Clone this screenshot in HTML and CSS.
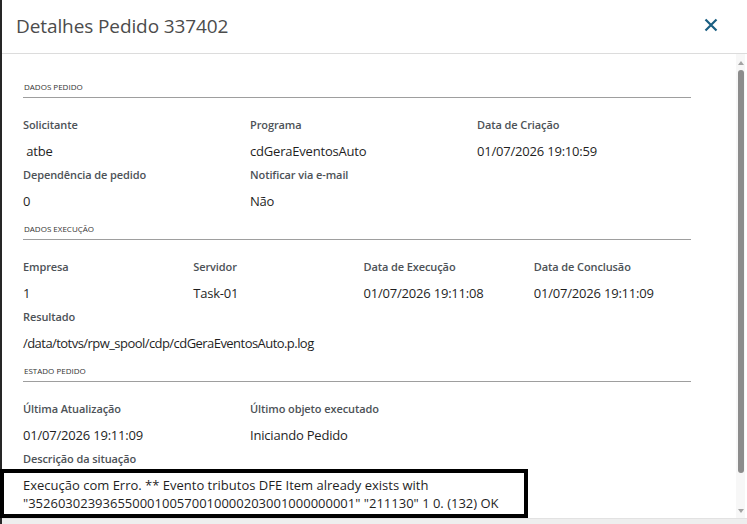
FILE: index.html
```html
<!DOCTYPE html>
<html lang="pt-BR">
<head>
    <meta charset="UTF-8">
    <meta name="viewport" content="width=device-width, initial-scale=1.0">
    <title>Detalhes Pedido</title>
    <link rel="stylesheet" href="styles.css">
</head>
<body>
    <div class="modal">
        <!-- Header -->
        <header class="modal-header">
            <h1 class="modal-title">Detalhes Pedido 337402</h1>
            <button class="close-btn" aria-label="Fechar">
                <svg width="14" height="14" viewBox="0 0 14 14"><path d="M1.5 1.5 L12.5 12.5 M12.5 1.5 L1.5 12.5" stroke="#1a5f82" stroke-width="2.2" fill="none"/></svg>
            </button>
        </header>

        <!-- Body -->
        <div class="modal-body">
            <div class="content">
                <section class="group">
                    <h2 class="group-title">DADOS PEDIDO</h2>
                    <div class="fields cols-3">
                        <div class="field"><span class="label">Solicitante</span><span class="value">&nbsp;atbe</span></div>
                        <div class="field"><span class="label">Programa</span><span class="value">cdGeraEventosAuto</span></div>
                        <div class="field"><span class="label">Data de Criação</span><span class="value">01/07/2026 19:10:59</span></div>
                        <div class="field"><span class="label">Dependência de pedido</span><span class="value">0</span></div>
                        <div class="field"><span class="label">Notificar via e-mail</span><span class="value">Não</span></div>
                    </div>
                </section>

                <section class="group">
                    <h2 class="group-title">DADOS EXECUÇÃO</h2>
                    <div class="fields cols-4">
                        <div class="field"><span class="label">Empresa</span><span class="value">1</span></div>
                        <div class="field"><span class="label">Servidor</span><span class="value">Task-01</span></div>
                        <div class="field"><span class="label">Data de Execução</span><span class="value">01/07/2026 19:11:08</span></div>
                        <div class="field"><span class="label">Data de Conclusão</span><span class="value">01/07/2026 19:11:09</span></div>
                        <div class="field full"><span class="label">Resultado</span><span class="value path">/data/totvs/rpw_spool/cdp/cdGeraEventosAuto.p.log</span></div>
                    </div>
                </section>

                <section class="group">
                    <h2 class="group-title">ESTADO PEDIDO</h2>
                    <div class="fields cols-3">
                        <div class="field"><span class="label">Última Atualização</span><span class="value">01/07/2026 19:11:09</span></div>
                        <div class="field"><span class="label">Último objeto executado</span><span class="value">Iniciando Pedido</span></div>
                        <div class="field"></div>
                        <div class="field full">
                            <span class="label">Descrição da situação</span>
                            <p class="situation">Execução com Erro. ** Evento tributos DFE Item already exists with "35260302393655000100570010000203001000000001" "211130" 1 0. (132) OK</p>
                        </div>
                    </div>
                </section>
            </div>

            <!-- Scrollbar -->
            <div class="scrollbar">
                <span class="arrow up"></span>
                <span class="thumb"></span>
                <span class="arrow down"></span>
            </div>
        </div>

        <footer class="modal-footer"></footer>
    </div>
</body>
</html>
```

FILE: styles.css
```css
/* Basic styling */
* { box-sizing: border-box; margin: 0; padding: 0; }
body { width: 747px; height: 524px; overflow: hidden; background-color: #ffffff; font-family: "Open Sans", "Noto Sans", sans-serif; color: #1f1f1f; }
.modal { display: flex; flex-direction: column; height: 524px; border-left: 2px solid #262626; }

/* Header */
.modal-header { display: flex; justify-content: space-between; align-items: center; height: 54px; padding: 0 29px 0 14px; border-bottom: 1px solid #dcdcdc; }
.modal-title { font-size: 19px; font-weight: 400; color: #4c4c4c; line-height: 26px; margin-top: -1px; letter-spacing: -0.1px; }
.close-btn { display: flex; border: none; background: none; cursor: pointer; margin-top: -3px; }

/* Body */
.modal-body { display: flex; flex: 1; min-height: 0; padding-right: 2px; }
.content { flex: 1; padding: 27px 32px 0 21px; }

/* Groups */
.group + .group { margin-top: 11px; }
.group-title { font-size: 8px; font-weight: 400; line-height: 12px; color: #333333; padding: 0 0 4px 1px; margin-right: 13px; border-bottom: 1px solid #9e9e9e; }
.fields { display: grid; row-gap: 2px; margin-top: 16px; }
.cols-3 { grid-template-columns: repeat(3, 1fr); }
.cols-4 { grid-template-columns: repeat(4, 1fr); }
.field { display: flex; flex-direction: column; min-height: 48px; }
.field.full { grid-column: 1 / -1; }
.label { font-size: 11px; font-weight: 600; line-height: 22px; color: #4d5257; margin-bottom: 4px; letter-spacing: -0.1px; }
.value { font-size: 13px; line-height: 22px; color: #1f1f1f; white-space: nowrap; letter-spacing: -0.2px; }
.value.path { letter-spacing: -0.55px; }

/* Highlighted situation */
.situation { width: 528px; margin: -5px 0 0 -23px; padding: 3px 8px 2px 19px; border: 4px solid #000000; font-size: 13px; line-height: 18px; color: #1f1f1f; }

/* Scrollbar */
.scrollbar { display: flex; flex-direction: column; align-items: center; width: 9px; background-color: #f7f7f7; padding: 7px 0 5px; }
.arrow { width: 0; height: 0; border-left: 3px solid transparent; border-right: 3px solid transparent; }
.arrow.up { border-bottom: 4px solid #a3a3a3; }
.arrow.down { border-top: 4px solid #a3a3a3; }
.thumb { flex: 1; width: 6px; margin: 5px 0 36px; border-radius: 3px; background-color: #8c8c8c; }

/* Footer */
.modal-footer { height: 6px; background-color: #eeeeee; border-top: 1px solid #e2e2e2; }
```
